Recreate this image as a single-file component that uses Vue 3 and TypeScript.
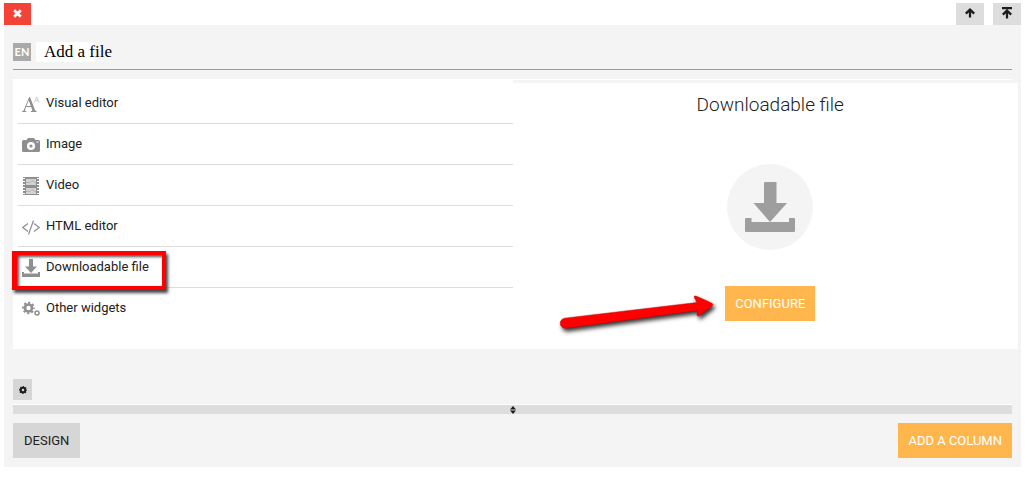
<script setup lang="ts">
import { ref } from 'vue'

type Icon = 'text' | 'image' | 'video' | 'code' | 'download' | 'gears'
interface Widget {
  icon: Icon
  label: string
}

const widgets: Widget[] = [
  { icon: 'text', label: 'Visual editor' },
  { icon: 'image', label: 'Image' },
  { icon: 'video', label: 'Video' },
  { icon: 'code', label: 'HTML editor' },
  { icon: 'download', label: 'Downloadable file' },
  { icon: 'gears', label: 'Other widgets' },
]
const selected = ref('Downloadable file')
const filmHoles = [1, 4, 7, 10, 13, 16]
</script>

<template>
  <main class="page">
    <header class="toolbar">
      <button class="tool close" type="button" aria-label="Remove">
        <svg width="9" height="9" viewBox="0 0 9 9"><path d="M1.2 1.2 7.8 7.8M7.8 1.2 1.2 7.8" stroke="#fff" stroke-width="2.8" /></svg>
      </button>
      <button class="tool" type="button" aria-label="Move up">
        <svg width="10" height="10" viewBox="0 0 10 10" fill="none" stroke="#1c1c1c" stroke-width="2.300"><path d="M5 1.5V9.500M.8 5.600 5 1.600 9.200 5.600" /></svg>
      </button>
      <button class="tool" type="button" aria-label="Move to top">
        <svg width="10" height="12" viewBox="0 0 10 12" fill="none" stroke="#1c1c1c" stroke-width="2.300"><path d="M0 1H10M5 3.5V11.500M.8 7.600 5 3.600 9.200 7.600" /></svg>
      </button>
    </header>

    <section class="panel">
      <div class="heading">
        <span class="lang">EN</span>
        <h1 class="title">Add a file</h1>
      </div>

      <div class="columns">
        <ul class="widgets">
          <li v-for="w in widgets" :key="w.label">
            <button class="widget" type="button" @click="selected = w.label">
              <svg class="icon" width="18" height="18" viewBox="0 0 18 18" fill="#8f8f8f" aria-hidden="true">
                <g v-if="w.icon === 'text'">
                  <path d="M0 17v-.7c1-.1 1.5-.5 2-1.8L7.200 2h.8l4.800 12.500c.5 1.300.8 1.700 2 1.800v.7H8.700v-.7c1.500-.1 1.900-.4 1.400-1.700l-.9-2.500H4.100l-.9 2.400c-.5 1.300-.1 1.700 1.300 1.800v.7zM4.500 11.100h4.300L6.700 5.300z" />
                  <path d="M12.500 7.500 14.800 2l2.300 5.500M13.500 5.500h2.800" fill="none" stroke="#cfcfcf" stroke-width="1" />
                </g>
                <path v-else-if="w.icon === 'image'" fill-rule="evenodd" d="M1.500 4H4.500L6 2h6l1.500 2h3Q18 4 18 5.500v9q0 1.500-1.500 1.500h-15Q0 16 0 14.500v-9Q0 4 1.500 4zM9 6a4 4 0 1 0 0 8 4 4 0 0 0 0-8zM9 8.400a1.600 1.600 0 1 1 0 3.200 1.600 1.600 0 0 1 0-3.200zM14.500 5.500v1h2v-1z" />
                <g v-else-if="w.icon === 'video'">
                  <path d="M1 0H17V18H1z" />
                  <path fill="#d3d3d3" d="M4 2H14V8H4zM4 11H14V17H4z" />
                  <path stroke="#b3b3b3" d="M4 5.500H8L10 3.500 14 6M4 14.500H8L10 12.500 14 15" fill="none" />
                  <g fill="#fff">
                    <template v-for="y in filmHoles" :key="y">
                      <rect x="1" :y="y" width="2" height="1" />
                      <rect x="15" :y="y" width="2" height="1" />
                    </template>
                  </g>
                </g>
                <path v-else-if="w.icon === 'code'" fill="none" stroke="#8f8f8f" stroke-width="1.200" d="M6 5.500 .8 9.500 6 13.500M12 5.500l5.200 4L12 13.500M11.500 2.500 6.500 16.500" />
                <path v-else-if="w.icon === 'download'" d="M7 0h4v7.500h4L9 14 3 7.500h4zM0 13h2v1.500h14V13h2v5H0z" />
                <g v-else fill="none" stroke="#8f8f8f">
                  <circle cx="6.500" cy="8" r="3.500" stroke-width="2.600" />
                  <circle cx="6.500" cy="8" r="5.400" stroke-width="1.900" stroke-dasharray="2.120 2.120" stroke-dashoffset="1.060" />
                  <circle cx="15" cy="13" r="2" stroke-width="1.500" />
                </g>
              </svg>
              <span>{{ w.label }}</span>
            </button>
            <span v-if="w.label === selected" class="marker"></span>
          </li>
        </ul>

        <div class="detail">
          <h2>{{ selected }}</h2>
          <div class="badge">
            <svg width="50" height="50" viewBox="0 0 50 50" fill="#9e9e9e" aria-hidden="true">
              <path d="M20 0H31Q31.500 0 31.500.5V21H42L25 40 8.500 21H19V1Q19 0 20 0zM1 36H6.500V40H44V36H49Q50 36 50 37V49Q50 50 49 50H1Q0 50 0 49V37Q0 36 1 36z" />
            </svg>
          </div>
          <div class="action">
            <button class="btn primary" type="button">CONFIGURE</button>
            <svg class="pointer" width="170" height="48" viewBox="0 0 170 48" aria-hidden="true">
              <path d="M9.500 28.200 142 12.500 139 7Q139 5.500 141 6L156.500 13Q159 14.500 157 16L144 26Q142 26.500 142 24.500L142.500 20.500 11 38.200A5 5 0 0 1 9.500 28.200z" fill="#fe0000" stroke="#d40000" stroke-width=".5" />
            </svg>
          </div>
        </div>
      </div>

      <button class="settings" type="button" aria-label="Settings">
        <svg width="8" height="8" viewBox="0 0 8 8" fill="none" stroke="#1c1c1c"><circle cx="4" cy="4" r="2.300" stroke-width="2" /><circle cx="4" cy="4" r="3.400" stroke-width="1.200" stroke-dasharray="1.340 1.330" stroke-dashoffset=".67" /></svg>
      </button>
      <div class="splitter">
        <svg width="6" height="8" viewBox="0 0 6 8" fill="#1c1c1c"><path d="M3 0 6 3.500H0zM3 8 0 4.500H6z" /></svg>
      </div>
      <footer class="footer">
        <button class="btn" type="button">DESIGN</button>
        <button class="btn primary" type="button">ADD A COLUMN</button>
      </footer>
    </section>
  </main>
</template>

<style>
body {
  background: #fff;
}
</style>

<style scoped>
.page {
  padding: 3px 8px 10px 4px;
  font: 13px/20px Roboto, sans-serif;
  color: #212121;
}
button {
  border: 0;
  font: inherit;
  color: inherit;
  cursor: pointer;
}
svg {
  display: block;
}
.toolbar {
  display: flex;
  gap: 9px;
}
.tool {
  display: flex;
  align-items: center;
  justify-content: center;
  width: 28px;
  height: 22px;
  padding: 0 0 2px;
  background: #ddd;
}
.close {
  width: 27px;
  margin-right: auto;
  background: #f44336;
}
.panel {
  padding: 17px 9px 9px;
  background: #f4f4f4;
}
.heading {
  display: flex;
  align-items: center;
  gap: 5px;
  padding-bottom: 7px;
  border-bottom: 1px solid #999;
}
.lang {
  width: 18px;
  background: #aaa;
  color: #fff;
  font: 700 11px/18px Lato, sans-serif;
  text-align: center;
}
.title {
  width: 59px;
  margin: 0;
  padding-left: 8px;
  box-sizing: border-box;
  background: #fff;
  color: #000;
  font: 17px/20px "Liberation Serif", serif;
  white-space: nowrap;
}
.columns {
  display: grid;
  grid-template-columns: 1fr 1fr;
  margin-top: 9px;
  background: #fff;
}
.widgets {
  margin: 0;
  padding: 4px 0 20px 5px;
  list-style: none;
}
.widgets li {
  position: relative;
  border-bottom: 1px solid #ddd;
}
.widgets li:last-child {
  border-bottom: 0;
}
.widget {
  display: flex;
  gap: 6px;
  width: 100%;
  height: 40px;
  padding: 10px 4px;
  background: none;
  text-align: left;
}
.icon {
  margin-top: 2px;
}
.marker {
  position: absolute;
  top: 4px;
  left: -6px;
  width: 154px;
  height: 39px;
  box-sizing: border-box;
  border: 5px solid #fe0000;
  border-width: 4px 4px 4px 5px;
  box-shadow: 2px 3px 3px #444, inset 2px 2px 3px #555;
  pointer-events: none;
}
.detail {
  display: flex;
  flex-direction: column;
  align-items: center;
  margin: 1px -6px 0 0;
  padding: 10px 0 28px 10px;
  border-top: 3px solid #f4f4f4;
  background: #fff;
}
.detail h2 {
  margin: 0;
  font-size: 19px;
  font-weight: 300;
  line-height: 24px;
}
.badge {
  display: flex;
  align-items: center;
  justify-content: center;
  width: 86px;
  height: 86px;
  margin: 47px 0 36px;
  border-radius: 50%;
  background: #f4f4f4;
}
.action {
  position: relative;
}
.btn {
  display: block;
  height: 35px;
  padding: 0 11px;
  background: #d6d6d6;
}
.primary {
  padding: 0 10px;
  background: #ffb74d;
  color: #fff;
}
.pointer {
  position: absolute;
  top: 4px;
  right: 100%;
  filter: drop-shadow(2px 3px 2px #333);
}
.settings {
  display: flex;
  align-items: center;
  justify-content: center;
  width: 19px;
  height: 21px;
  margin-top: 30px;
  padding: 0;
  background: #d6d6d6;
}
.splitter {
  display: flex;
  align-items: center;
  justify-content: center;
  height: 9px;
  margin-top: 4px;
  border-top: 1px solid #fff;
  background: #ddd;
}
.footer {
  display: flex;
  justify-content: space-between;
  margin-top: 9px;
}
</style>
